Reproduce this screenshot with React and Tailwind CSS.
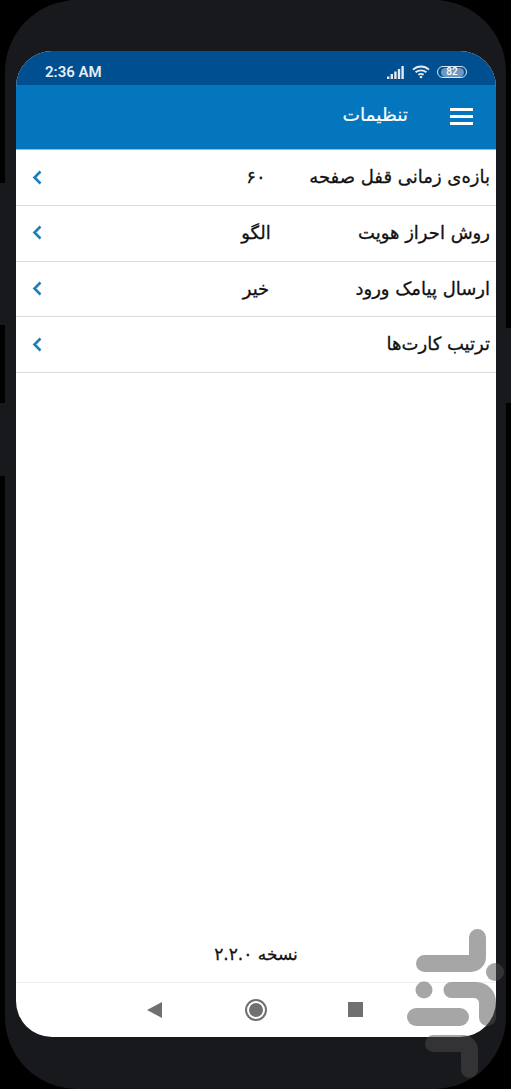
const fa = { fontFamily: '"DejaVu Sans", sans-serif' };

const rows = [
  { label: "بازه‌ی زمانی قفل صفحه", value: "۶۰" },
  { label: "روش احراز هویت", value: "الگو" },
  { label: "ارسال پیامک ورود", value: "خیر" },
  { label: "ترتیب کارت‌ها", value: "" },
];

function Chevron() {
  return (
    <svg className="-translate-y-[0.5px]" width="12" height="16" viewBox="0 0 12 16" fill="none" stroke="#1a7fbd" strokeWidth="2.6">
      <path d="M9.5 2 L3.5 8 L9.5 14" />
    </svg>
  );
}

function Row({ label, value }) {
  return (
    <div className="h-[55.67px] flex items-center border-b border-[#dcdcdc] pl-[15px] pr-[6px]" dir="ltr">
      <Chevron />
      <div className="flex-1 flex items-center justify-between text-[18px] text-[#111] [-webkit-text-stroke:0.3px_#111] -translate-y-px" dir="rtl" style={fa}>
        <span className="whitespace-nowrap">{label}</span>
        <span className="w-[60px] ml-[183px] text-center whitespace-nowrap">{value}</span>
      </div>
    </div>
  );
}

function StatusIcons() {
  return (
    <div className="flex items-center">
      <svg width="18" height="13" viewBox="0 0 18 13" fill="#e2ebf3">
        <rect x="0" y="10.5" width="2.4" height="2.5" />
        <rect x="3.6" y="8" width="2.4" height="5" />
        <rect x="7.2" y="5.5" width="2.4" height="7.5" />
        <rect x="10.8" y="3" width="2.4" height="10" />
        <rect x="14.4" y="0" width="2.4" height="13" />
      </svg>
      <svg className="ml-[7px]" width="18" height="14" viewBox="0 0 19 14" fill="none" stroke="#e2ebf3" strokeWidth="2">
        <path d="M1 4.5 C6 0 13 0 18 4.5" />
        <path d="M3.8 7.3 C7 4.6 12 4.6 15.2 7.3" />
        <path d="M6.7 10 C8.3 8.8 10.7 8.8 12.3 10" />
        <circle cx="9.5" cy="12.3" r="1.4" fill="#e2ebf3" stroke="none" />
      </svg>
      <div className="ml-[7px] w-[30px] h-[12px] rounded-full border border-[#dce6f0] flex items-center justify-center">
        <div className="w-[23px] h-[9px] rounded-full bg-[#6f97c0] flex items-center justify-center text-[10px] leading-none font-medium text-white" style={{ fontFamily: "Roboto, sans-serif" }}>82</div>
      </div>
    </div>
  );
}

// store logo that sits over the bottom corner of the phone
function Watermark() {
  return (
    <svg className="absolute left-[400px] top-[925px]" width="111" height="164" viewBox="400 925 111 164" fill="#4e4e4e" fillOpacity="0.5">
      <path d="M469 937.5 a8.5 8.5 0 0 1 17 0 V957 a15 15 0 0 1 -15 15 H424.5 a8.5 8.5 0 0 1 0 -17 H469 Z" />
      <circle cx="495" cy="972" r="9" />
      <circle cx="424" cy="990" r="8.5" />
      <path d="M451.5 982 H476 a20 20 0 0 1 20 20 V1017.5 a8.5 8.5 0 0 1 -17 0 V1003 a5 5 0 0 0 -5 -5 H451.5 a8 8 0 0 1 0 -16 Z" />
      <rect x="407" y="1008" width="62" height="18" rx="9" />
      <path d="M433.5 1035 H463 a15 15 0 0 1 15 15 V1069.5 a8.5 8.5 0 0 1 -17 0 V1052 H433.5 a8.5 8.5 0 0 1 0 -17 Z" />
    </svg>
  );
}

export default function App() {
  return (
    <div className="relative w-[511px] h-[1089px] bg-black overflow-hidden">
      <div className="absolute left-0 top-[183px] w-[6px] h-[142px] bg-[#18191d]" />
      <div className="absolute left-0 top-[403px] w-[6px] h-[73px] bg-[#18191d]" />
      <div className="absolute right-0 top-[328px] w-[6px] h-[75px] bg-[#18191d]" />

      <div className="relative ml-[5px] w-[501px] h-[1089px] rounded-[72px] bg-[#18191d] pt-[51px] px-[11px]">
        <div className="w-[480px] h-[986px] rounded-[36px] bg-white overflow-hidden flex flex-col">
          <div className="h-[34px] shrink-0 bg-[#004f90] flex items-center justify-between pt-[8px] pl-[29px] pr-[29px]">
            <span className="text-[15px] font-semibold text-[#e6edf4]" style={{ fontFamily: "Roboto, sans-serif" }}>2:36 AM</span>
            <StatusIcons />
          </div>
          <div className="h-[65px] shrink-0 bg-[#0376bd] flex items-center justify-end pr-[23px] gap-[42px] border-b border-[#7cc4ea]">
            <span className="text-[18.6px] text-white [-webkit-text-stroke:0.2px_#fff] -translate-y-[2px]" dir="rtl" style={fa}>تنظیمات</span>
            <div className="w-[23px] flex flex-col gap-[4px] -translate-y-px">
              <div className="h-[3px] bg-white" />
              <div className="h-[3px] bg-white" />
              <div className="h-[3px] bg-white" />
            </div>
          </div>
          <div className="pt-[0.4px]">
            {rows.map((r) => (
              <Row key={r.label} {...r} />
            ))}
          </div>
          <div className="flex-1 flex items-end justify-center pb-[15px] text-[17px] text-[#111] [-webkit-text-stroke:0.3px_#111]" dir="rtl" style={fa}>
            نسخه ۲.۲.۰
          </div>
          <div className="h-[55px] shrink-0 border-t border-[#efefef] flex items-center">
            <div className="ml-[131px] w-0 h-0 border-y-[8px] border-y-transparent border-r-[15px] border-r-[#707070]" />
            <div className="ml-[83px] w-[22px] h-[22px] rounded-full border-2 border-[#707070] p-[2px]">
              <div className="w-full h-full rounded-full bg-[#707070]" />
            </div>
            <div className="ml-[81px] w-[15px] h-[15px] bg-[#707070] -translate-y-px" />
          </div>
        </div>
      </div>

      <Watermark />
    </div>
  );
}
